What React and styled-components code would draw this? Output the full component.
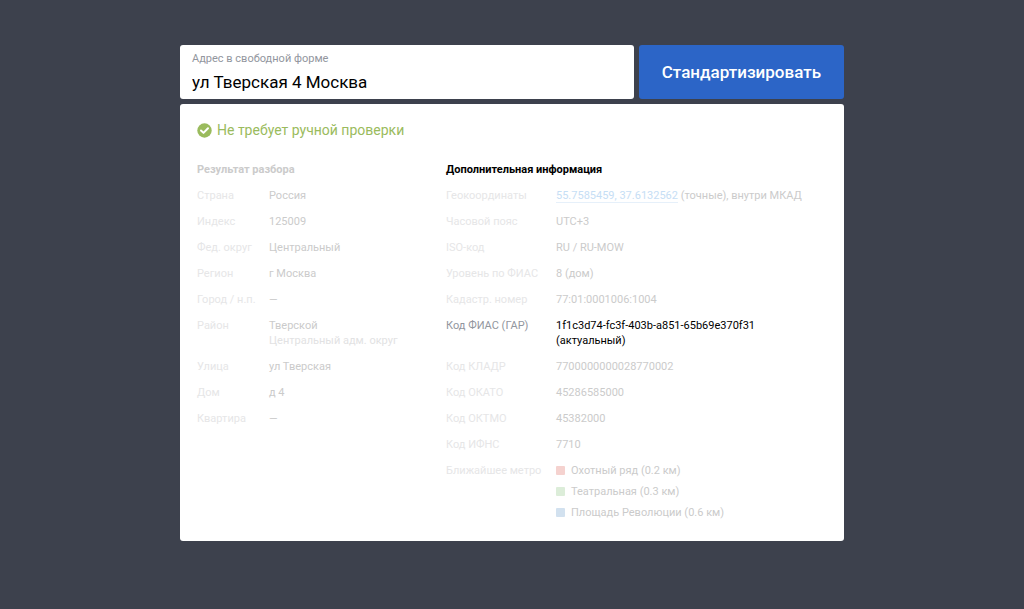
import React, { useState } from 'react'
import styled, { createGlobalStyle } from 'styled-components'

const GlobalStyle = createGlobalStyle`
  * {
    box-sizing: border-box;
  }
  body {
    margin: 0;
    background: #3d414d;
    color: #000;
    font-family: Roboto, "Liberation Sans", sans-serif;
    font-size: 11px;
    line-height: 15px;
  }
`

const Page = styled.main`
  width: 100%;
  max-width: 704px;
  margin: 0 auto;
  padding: 45px 20px;
  display: flex;
  flex-direction: column;
  gap: 5px;
`

const SearchForm = styled.form`
  display: flex;
  gap: 5px;
`

const Field = styled.label`
  flex: 1;
  min-width: 0;
  padding: 6px 12px 5px;
  display: flex;
  flex-direction: column;
  gap: 4px;
  background: #fff;
  border-radius: 3px;
  color: #92969e;
`

const FieldInput = styled.input`
  width: 100%;
  height: 24px;
  padding: 0;
  border: 0;
  outline: 0;
  background: none;
  color: #000;
  font-family: inherit;
  font-size: 17px;
`

const SubmitButton = styled.button`
  flex: none;
  padding: 0 23px;
  border: 0;
  border-radius: 3px;
  background: #2c65c7;
  color: #fff;
  font-family: inherit;
  font-size: 17px;
  font-weight: 500;
  cursor: pointer;
`

const Card = styled.section`
  padding: 16px 17px 21px;
  background: #fff;
  border-radius: 3px;
`

const Status = styled.p`
  margin: 0 0 22px;
  display: flex;
  align-items: center;
  gap: 5px;
  color: #9abb5d;
  font-size: 14px;
  line-height: 20px;
`

const Columns = styled.div`
  display: flex;
  flex-wrap: wrap;
  gap: 24px;
`

const Column = styled.section`
  flex: ${({ $grow }) => ($grow ? '1 1 320px' : '0 0 225px')};
`

const Heading = styled.h2`
  margin: 0 0 11px;
  font-size: 11px;
  font-weight: 700;
  color: ${({ $active }) => ($active ? '#000' : '#cbcbcb')};
`

const List = styled.dl`
  margin: 0;
  display: flex;
  flex-direction: column;
  gap: 11px;
`

const Row = styled.div`
  display: grid;
  grid-template-columns: ${({ $labelWidth }) => $labelWidth}px 1fr;
  color: ${({ $active }) => ($active ? '#000' : '#cbcbcb')};
`

const Term = styled.dt`
  white-space: nowrap;
  color: ${({ $active }) => ($active ? '#92969e' : '#e6e6e7')};
`

const Value = styled.dd`
  margin: 0;
`

const Note = styled.div`
  color: #e2e2e3;
`

const GeoLink = styled.a`
  color: #c6def5;
  text-decoration: none;
  border-bottom: 1px solid #e6f0fa;
`

const Stations = styled.ul`
  margin: 0;
  padding: 0;
  list-style: none;
  display: flex;
  flex-direction: column;
  gap: 6px;
`

const Station = styled.li`
  display: flex;
  align-items: center;
  gap: 6px;

  &::before {
    content: '';
    width: 9px;
    height: 9px;
    border-radius: 1px;
    background: ${({ $color }) => $color};
  }
`

const parsed = [
  { label: 'Страна', value: 'Россия' },
  { label: 'Индекс', value: '125009' },
  { label: 'Фед. округ', value: 'Центральный' },
  { label: 'Регион', value: 'г Москва' },
  { label: 'Город / н.п.', value: '—' },
  { label: 'Район', value: 'Тверской', note: 'Центральный адм. округ' },
  { label: 'Улица', value: 'ул Тверская' },
  { label: 'Дом', value: 'д 4' },
  { label: 'Квартира', value: '—' },
]

const stations = [
  { name: 'Охотный ряд (0.2 км)', color: '#f5d2cf' },
  { name: 'Театральная (0.3 км)', color: '#dcedd9' },
  { name: 'Площадь Революции (0.6 км)', color: '#d2e1ef' },
]

const extra = [
  {
    label: 'Геокоординаты',
    value: (
      <>
        <GeoLink href="#map">55.7585459, 37.6132562</GeoLink> (точные), внутри МКАД
      </>
    ),
  },
  { label: 'Часовой пояс', value: 'UTC+3' },
  { label: 'ISO-код', value: 'RU / RU-MOW' },
  { label: 'Уровень по ФИАС', value: '8 (дом)' },
  { label: 'Кадастр. номер', value: '77:01:0001006:1004' },
  {
    label: 'Код ФИАС (ГАР)',
    value: (
      <>
        1f1c3d74-fc3f-403b-a851-65b69e370f31
        <br />
        (актуальный)
      </>
    ),
    active: true,
  },
  { label: 'Код КЛАДР', value: '7700000000028770002' },
  { label: 'Код ОКАТО', value: '45286585000' },
  { label: 'Код ОКТМО', value: '45382000' },
  { label: 'Код ИФНС', value: '7710' },
  {
    label: 'Ближайшее метро',
    value: (
      <Stations>
        {stations.map((s) => (
          <Station key={s.name} $color={s.color}>
            {s.name}
          </Station>
        ))}
      </Stations>
    ),
  },
]

function CheckIcon() {
  return (
    <svg width="15" height="15" viewBox="0 0 15 15" aria-hidden="true">
      <circle cx="7.5" cy="7.5" r="7.2" fill="#9abb5d" />
      <path
        d="M4 7.5 L6.5 9.9 L11 5.3"
        fill="none"
        stroke="#fff"
        strokeWidth="2"
        strokeLinecap="round"
        strokeLinejoin="round"
      />
    </svg>
  )
}

function Details({ rows, labelWidth }) {
  return (
    <List>
      {rows.map((row) => (
        <Row key={row.label} $labelWidth={labelWidth} $active={row.active}>
          <Term $active={row.active}>{row.label}</Term>
          <Value>
            {row.value}
            {row.note && <Note>{row.note}</Note>}
          </Value>
        </Row>
      ))}
    </List>
  )
}

function App() {
  const [address, setAddress] = useState('ул Тверская 4 Москва')

  return (
    <>
      <GlobalStyle />
      <Page>
        <SearchForm onSubmit={(e) => e.preventDefault()}>
          <Field htmlFor="address">
            Адрес в свободной форме
            <FieldInput
              id="address"
              type="text"
              value={address}
              onChange={(e) => setAddress(e.target.value)}
            />
          </Field>
          <SubmitButton type="submit">Стандартизировать</SubmitButton>
        </SearchForm>

        <Card>
          <Status>
            <CheckIcon />
            Не требует ручной проверки
          </Status>
          <Columns>
            <Column>
              <Heading>Результат разбора</Heading>
              <Details rows={parsed} labelWidth={72} />
            </Column>
            <Column $grow>
              <Heading $active>Дополнительная информация</Heading>
              <Details rows={extra} labelWidth={110} />
            </Column>
          </Columns>
        </Card>
      </Page>
    </>
  )
}

export default App
